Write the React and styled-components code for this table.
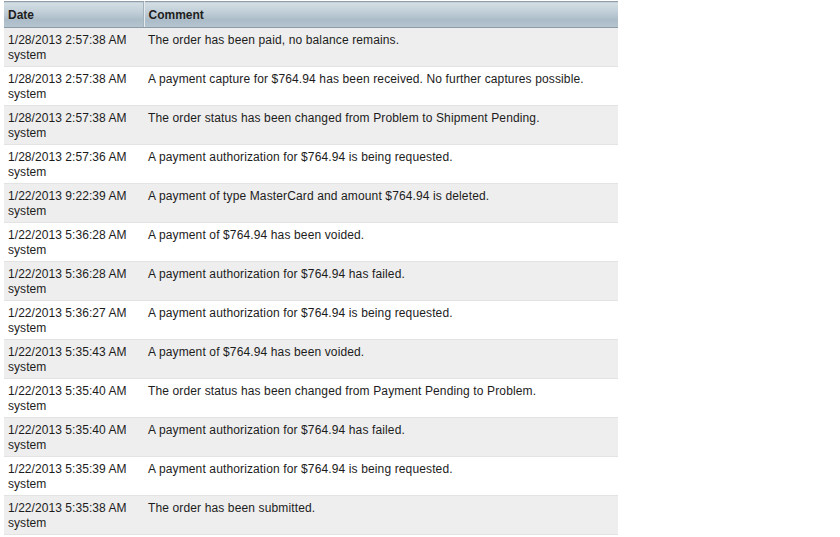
import React from 'react';
import styled, { createGlobalStyle } from 'styled-components';

const GlobalStyle = createGlobalStyle`
  body {
    margin: 0;
    background: #fff;
    font-family: Arial, "Liberation Sans", sans-serif;
  }
`;

const Wrapper = styled.div`
  padding: 1px 0 0 4px;
`;

const Table = styled.table`
  width: 614px;
  border-collapse: collapse;
  table-layout: fixed;
  font-size: 12px;
  color: #1c1c1c;
`;

const HeadCell = styled.th`
  height: 25px;
  padding: 0 4px;
  text-align: left;
  font-weight: bold;
  font-size: 12px;
  color: #1e1e1e;
  background: linear-gradient(to bottom, #d3dde4 0%, #c3d0d9 35%, #abbcc8 70%, #b6c5cf 100%);
  border-top: 1px solid #8f9ea8;
  border-bottom: 1px solid #8c9ba5;
  border-right: ${(p) => (p.$last ? '0' : '1px solid #e4eaee')};
  box-shadow: ${(p) => (p.$last ? 'none' : 'inset -1px 0 0 #a3b3be')};
`;

const Row = styled.tr`
  background: ${(p) => (p.$alt ? '#eeeeee' : '#ffffff')};
  border-bottom: 1px solid #e3e3e3;
`;

const Cell = styled.td`
  padding: 5px 4px 3px;
  line-height: 15px;
  letter-spacing: ${(p) => (p.$wide ? '0.13px' : '0.06px')};
  vertical-align: top;
  white-space: nowrap;
`;

const DateCol = styled.col`
  width: 140px;
`;

const entries = [
  ['1/28/2013 2:57:38 AM', 'The order has been paid, no balance remains.'],
  ['1/28/2013 2:57:38 AM', 'A payment capture for $764.94 has been received. No further captures possible.'],
  ['1/28/2013 2:57:38 AM', 'The order status has been changed from Problem to Shipment Pending.'],
  ['1/28/2013 2:57:36 AM', 'A payment authorization for $764.94 is being requested.'],
  ['1/22/2013 9:22:39 AM', 'A payment of type MasterCard and amount $764.94 is deleted.'],
  ['1/22/2013 5:36:28 AM', 'A payment of $764.94 has been voided.'],
  ['1/22/2013 5:36:28 AM', 'A payment authorization for $764.94 has failed.'],
  ['1/22/2013 5:36:27 AM', 'A payment authorization for $764.94 is being requested.'],
  ['1/22/2013 5:35:43 AM', 'A payment of $764.94 has been voided.'],
  ['1/22/2013 5:35:40 AM', 'The order status has been changed from Payment Pending to Problem.'],
  ['1/22/2013 5:35:40 AM', 'A payment authorization for $764.94 has failed.'],
  ['1/22/2013 5:35:39 AM', 'A payment authorization for $764.94 is being requested.'],
  ['1/22/2013 5:35:38 AM', 'The order has been submitted.'],
];

export default function App() {
  return (
    <Wrapper>
      <GlobalStyle />
      <Table>
        <colgroup>
          <DateCol />
          <col />
        </colgroup>
        <thead>
          <tr>
            <HeadCell>Date</HeadCell>
            <HeadCell $last>Comment</HeadCell>
          </tr>
        </thead>
        <tbody>
          {entries.map(([date, comment], i) => (
            <Row key={i} $alt={i % 2 === 0}>
              <Cell>
                {date}
                <br />
                system
              </Cell>
              <Cell $wide>{comment}</Cell>
            </Row>
          ))}
        </tbody>
      </Table>
    </Wrapper>
  );
}
